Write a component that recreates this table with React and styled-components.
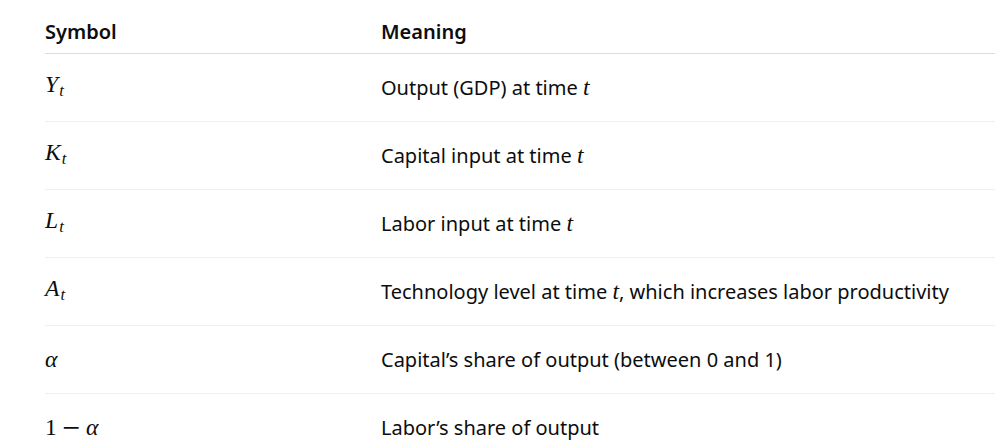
import styled, { createGlobalStyle } from "styled-components";

const GlobalStyle = createGlobalStyle`
  body {
    margin: 0;
    background: #ffffff;
    color: #0d0d0d;
    font-family: "Noto Sans", "Open Sans", sans-serif;
    overflow: hidden;
  }
`;

const Page = styled.div`
  padding-left: 45px;
`;

const Table = styled.table`
  width: 100%;
  border-collapse: collapse;
  font-size: 20px;
  line-height: 28px;
`;

const HeadCell = styled.th`
  text-align: left;
  font-weight: 600;
  padding: 18px 0 7px;
  border-bottom: 1px solid #dcdcdc;
  width: ${(props) => props.w || "auto"};
`;

const Row = styled.tr`
  border-bottom: 1px solid #efefef;
`;

const Cell = styled.td`
  height: 67px;
  padding: 0;
  vertical-align: middle;
`;

const Math = styled.span`
  font-family: "Liberation Serif", "Times New Roman", serif;
  font-size: 1.18em;
  font-style: italic;
  white-space: nowrap;
`;

const Digit = styled.span`
  font-style: normal;
`;

const Sub = styled.sub`
  font-size: 0.7em;
  font-style: italic;
  vertical-align: -0.25em;
  margin-left: 1px;
`;

const Op = styled.span`
  font-family: "DejaVu Serif", serif;
  font-style: normal;
  font-weight: 300;
  margin: 0 0.2em;
`;

const rows = [
  {
    sym: (
      <Math>
        Y<Sub>t</Sub>
      </Math>
    ),
    text: (
      <>
        Output (GDP) at time <Math>t</Math>
      </>
    ),
  },
  {
    sym: (
      <Math>
        K<Sub>t</Sub>
      </Math>
    ),
    text: (
      <>
        Capital input at time <Math>t</Math>
      </>
    ),
  },
  {
    sym: (
      <Math>
        L<Sub>t</Sub>
      </Math>
    ),
    text: (
      <>
        Labor input at time <Math>t</Math>
      </>
    ),
  },
  {
    sym: (
      <Math>
        A<Sub>t</Sub>
      </Math>
    ),
    text: (
      <>
        Technology level at time <Math>t</Math>, which increases labor
        productivity
      </>
    ),
  },
  {
    sym: <Math>α</Math>,
    text: <>Capital’s share of output (between 0 and 1)</>,
  },
  {
    sym: (
      <Math>
        <Digit>1</Digit>
        <Op>−</Op>α
      </Math>
    ),
    text: <>Labor’s share of output</>,
  },
];

export default function App() {
  return (
    <Page>
      <GlobalStyle />
      <Table>
        <thead>
          <tr>
            <HeadCell w="336px">Symbol</HeadCell>
            <HeadCell>Meaning</HeadCell>
          </tr>
        </thead>
        <tbody>
          {rows.map((r, i) => (
            <Row key={i}>
              <Cell>{r.sym}</Cell>
              <Cell>{r.text}</Cell>
            </Row>
          ))}
        </tbody>
      </Table>
    </Page>
  );
}
